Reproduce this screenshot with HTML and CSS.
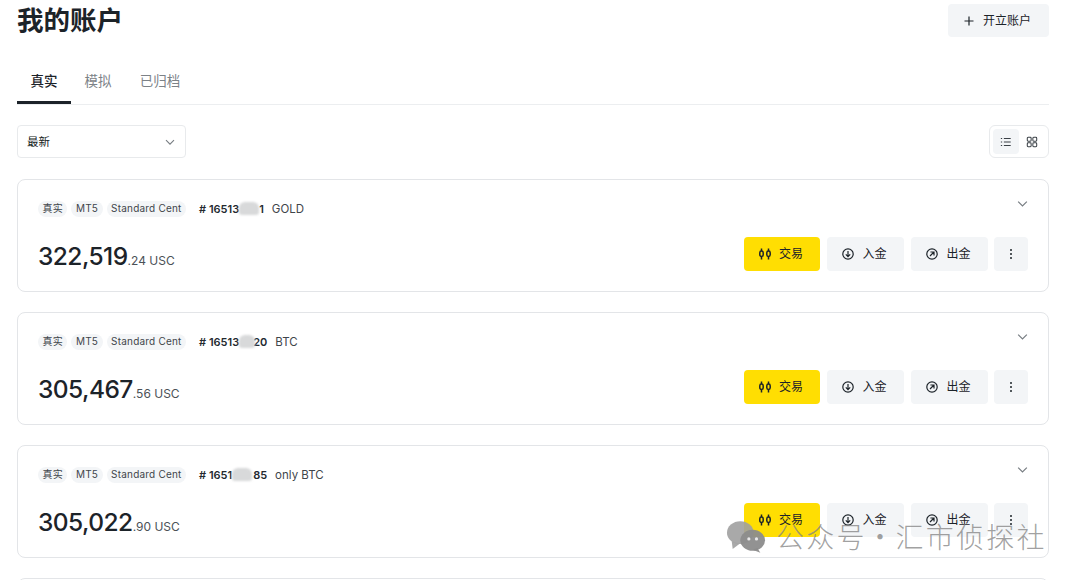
FILE: index.html
```html
<!DOCTYPE html>
<html lang="zh-CN">
<head>
<meta charset="utf-8">
<title>我的账户</title>
<link rel="stylesheet" href="styles.css">
</head>
<body>
<main class="page">
  <header class="head">
    <h1 class="title">我的账户</h1>
    <button class="btn open"><svg class="ic" viewBox="0 0 14 14"><path d="M7 2.500v9M2.500 7h9"/></svg>开立账户</button>
  </header>
  <nav class="tabs">
    <a class="tab active">真实</a>
    <a class="tab">模拟</a>
    <a class="tab">已归档</a>
  </nav>
  <div class="tools">
    <div class="select">最新<svg class="chev" viewBox="0 0 12 12"><path d="M2 4.200l4 4 4-4"/></svg></div>
    <div class="toggle">
      <span class="tg on"><svg class="ic small" viewBox="0 0 14 14"><path d="M4.500 3h8M4.500 7h8M4.500 11h8M1 3h1.500M1 7h1.500M1 11h1.500"/></svg></span>
      <span class="tg"><svg class="ic small" viewBox="0 0 14 14"><rect x="1.500" y="1.500" width="4.500" height="4.500" rx="1"/><rect x="8" y="1.500" width="4.500" height="4.500" rx="1"/><rect x="1.500" y="8" width="4.500" height="4.500" rx="1"/><rect x="8" y="8" width="4.500" height="4.500" rx="1"/></svg></span>
    </div>
  </div>

  <section class="card">
    <div class="row top">
      <div class="meta">
        <span class="chip">真实</span><span class="chip">MT5</span><span class="chip">Standard Cent</span>
        <span class="id"># 16513<i class="blur b1"></i>1</span><span class="name">GOLD</span>
      </div>
      <svg class="chev big" viewBox="0 0 12 12"><path d="M2 4.200l4 4 4-4"/></svg>
    </div>
    <div class="row bottom">
      <div class="bal"><b>322,519</b><span>.24 USC</span></div>
      <div class="acts">
        <button class="btn trade"><svg class="ic candle" viewBox="0 0 14 14"><path d="M3.500 1.500v2.500M3.500 9.500v3M10.500 1.500v2.500M10.500 9.500v3"/><rect x="1.800" y="4" width="3.400" height="5.500" rx="1.700"/><rect x="8.800" y="4" width="3.400" height="5.500" rx="1.700"/></svg>交易</button>
        <button class="btn act"><svg class="ic" viewBox="0 0 14 14"><circle cx="7" cy="7" r="5.200"/><path d="M7 4v5.500M4.800 7.400L7 9.600l2.200-2.200"/></svg>入金</button>
        <button class="btn act"><svg class="ic" viewBox="0 0 14 14"><circle cx="7" cy="7" r="5.200"/><path d="M5 9l4-4M5.400 5H9v3.600"/></svg>出金</button>
        <button class="btn more"><svg class="ic dots" viewBox="0 0 14 14"><circle cx="7" cy="3" r="1"/><circle cx="7" cy="7" r="1"/><circle cx="7" cy="11" r="1"/></svg></button>
      </div>
    </div>
  </section>

  <section class="card">
    <div class="row top">
      <div class="meta">
        <span class="chip">真实</span><span class="chip">MT5</span><span class="chip">Standard Cent</span>
        <span class="id"># 16513<i class="blur b2"></i>20</span><span class="name">BTC</span>
      </div>
      <svg class="chev big" viewBox="0 0 12 12"><path d="M2 4.200l4 4 4-4"/></svg>
    </div>
    <div class="row bottom">
      <div class="bal"><b>305,467</b><span>.56 USC</span></div>
      <div class="acts">
        <button class="btn trade"><svg class="ic candle" viewBox="0 0 14 14"><path d="M3.500 1.500v2.500M3.500 9.500v3M10.500 1.500v2.500M10.500 9.500v3"/><rect x="1.800" y="4" width="3.400" height="5.500" rx="1.700"/><rect x="8.800" y="4" width="3.400" height="5.500" rx="1.700"/></svg>交易</button>
        <button class="btn act"><svg class="ic" viewBox="0 0 14 14"><circle cx="7" cy="7" r="5.200"/><path d="M7 4v5.500M4.800 7.400L7 9.600l2.200-2.200"/></svg>入金</button>
        <button class="btn act"><svg class="ic" viewBox="0 0 14 14"><circle cx="7" cy="7" r="5.200"/><path d="M5 9l4-4M5.400 5H9v3.600"/></svg>出金</button>
        <button class="btn more"><svg class="ic dots" viewBox="0 0 14 14"><circle cx="7" cy="3" r="1"/><circle cx="7" cy="7" r="1"/><circle cx="7" cy="11" r="1"/></svg></button>
      </div>
    </div>
  </section>

  <section class="card">
    <div class="row top">
      <div class="meta">
        <span class="chip">真实</span><span class="chip">MT5</span><span class="chip">Standard Cent</span>
        <span class="id"># 1651<i class="blur b3"></i>85</span><span class="name">only BTC</span>
      </div>
      <svg class="chev big" viewBox="0 0 12 12"><path d="M2 4.200l4 4 4-4"/></svg>
    </div>
    <div class="row bottom">
      <div class="bal"><b>305,022</b><span>.90 USC</span></div>
      <div class="acts">
        <button class="btn trade"><svg class="ic candle" viewBox="0 0 14 14"><path d="M3.500 1.500v2.500M3.500 9.500v3M10.500 1.500v2.500M10.500 9.500v3"/><rect x="1.800" y="4" width="3.400" height="5.500" rx="1.700"/><rect x="8.800" y="4" width="3.400" height="5.500" rx="1.700"/></svg>交易</button>
        <button class="btn act"><svg class="ic" viewBox="0 0 14 14"><circle cx="7" cy="7" r="5.200"/><path d="M7 4v5.500M4.800 7.400L7 9.600l2.200-2.200"/></svg>入金</button>
        <button class="btn act"><svg class="ic" viewBox="0 0 14 14"><circle cx="7" cy="7" r="5.200"/><path d="M5 9l4-4M5.400 5H9v3.600"/></svg>出金</button>
        <button class="btn more"><svg class="ic dots" viewBox="0 0 14 14"><circle cx="7" cy="3" r="1"/><circle cx="7" cy="7" r="1"/><circle cx="7" cy="11" r="1"/></svg></button>
      </div>
    </div>
  </section>

  <section class="card"></section>
</main>

<div class="mark">
  <svg class="wx" viewBox="0 0 42 34">
    <ellipse class="w1" cx="15" cy="13" rx="14" ry="12"/>
    <path class="w1" d="M6 22l1 8 7-5z"/>
    <ellipse class="w2" cx="28" cy="21" rx="13" ry="11"/>
    <path class="w2" d="M33 29l3 5-8-3z"/>
    <circle class="w3" cx="24" cy="19.500" r="1.700"/><circle class="w3" cx="32" cy="19.500" r="1.700"/>
  </svg>
  <span>公众号 · 汇市侦探社</span>
</div>
</body>
</html>
```

FILE: styles.css
```css
* { box-sizing: border-box; }
html, body { margin: 0; height: 580px; overflow: hidden; background: #fff; }
body {
  position: relative;
  font-family: Inter, "Noto Sans CJK SC", sans-serif;
  color: #141a21;
}
.page { width: 1032px; margin-left: 17px; }
.head { display: flex; justify-content: space-between; align-items: flex-start; height: 62px; padding-top: 4px; }
.title { margin: 0; font-size: 26.500px; line-height: 34px; font-weight: 700; margin-top: -2px; font-family: "Noto Sans CJK SC", sans-serif; color: #1c2329; }
.btn { display: inline-flex; align-items: center; justify-content: center; border: 0; border-radius: 4px; font-size: 12px; line-height: 16px; color: #1c2329; font-family: "Noto Sans CJK SC", sans-serif; padding: 0 3px 2px 0; }
.ic { width: 14px; height: 14px; fill: none; stroke: currentColor; stroke-width: 1.200; margin-top: 2px; }
.candle { stroke-width: 1.500; }
.small { width: 12px; height: 12px; margin-top: 0; }
.open { width: 101px; height: 33px; background: #f3f5f7; gap: 7px; padding-right: 4px; }
.tabs { display: flex; height: 43px; border-bottom: 1px solid #eceef0; }
.tab { width: 54px; height: 44px; display: flex; align-items: center; justify-content: center; font-size: 13.500px; color: #7c8287; margin-top: -2px; padding-bottom: 1px; font-family: "Noto Sans CJK SC", sans-serif; border-bottom: 3px solid transparent; }
.tab:nth-child(3) { width: 68px; margin-left: 1px; }
.tab.active { color: #1c2329; border-bottom-color: #1c2329; font-weight: 500; }
.tools { display: flex; justify-content: space-between; margin-top: 20px; height: 33px; }
.select { width: 169px; height: 33px; border: 1px solid #e8eaec; border-radius: 4px; display: flex; align-items: center; justify-content: space-between; padding: 0 9px 2px 9px; font-size: 11.500px; font-family: "Noto Sans CJK SC", sans-serif; }
.chev { width: 12px; height: 12px; fill: none; stroke: #777d82; stroke-width: 1.100; margin-top: 2px; }
.toggle { width: 60px; height: 33px; border: 1px solid #e8eaec; border-radius: 6px; display: flex; padding: 3px; }
.tg { width: 27px; display: flex; align-items: center; justify-content: center; border-radius: 4px; color: #3a4046; }
.tg.on { background: #f3f5f7; }
.card { height: 113px; margin-top: 20px; border: 1px solid #e3e5e8; border-radius: 8px; padding: 0 20px; }
.card:first-of-type { margin-top: 21px; }
.row { display: flex; justify-content: space-between; }
.top { height: 57px; align-items: flex-start; padding-top: 17px; }
.big { width: 13px; height: 13px; margin-top: 0; margin-right: -1px; }
.meta { display: flex; align-items: center; font-size: 10px; height: 24px; }
.chip { height: 16px; line-height: 15px; padding: 0 4.500px; margin-right: 4px; border-radius: 8px; background: #f3f5f7; color: #3f454b; letter-spacing: .2px; white-space: nowrap; }
.chip:nth-child(3) { margin-right: 13px; }
.id { font-size: 11px; font-weight: 600; color: #23292f; white-space: nowrap; display: inline-flex; align-items: center; margin-top: -1px; }
.blur { display: inline-block; background: #d8d9da; filter: blur(1px); height: 13px; border-radius: 6px 6px 3px 3px; }
.b1 { width: 20px; margin: 0; }
.b2 { width: 16px; margin: 0 -2px 0 0; }
.b3 { width: 20px; margin: 0 1px 0 0; }
.name { font-size: 11.500px; margin-left: 8px; margin-top: -1px; color: #3f454b; }
.bottom { align-items: center; height: 34px; }
.bal { display: flex; align-items: baseline; margin-top: 3px; }
.bal b { font-size: 24.500px; font-weight: 500; letter-spacing: -.55px; color: #1c2329; }
.bal span { font-size: 12px; color: #4b5157; }
.acts { display: flex; gap: 7px; }
.acts .btn { height: 34px; width: 76px; gap: 7px; }
.trade { background: #ffde02; }
.acts .act { background: #f3f5f7; width: 77px; }
.acts .more { background: #f3f5f7; width: 34px; margin-left: -1px; padding: 0; }
.acts .more .ic { margin-top: 0; }
.dots { fill: currentColor; stroke: none; }
.mark { position: absolute; left: 726px; top: 518px; display: flex; align-items: center; gap: 10px; color: rgba(130,130,130,.75); font-size: 28px; letter-spacing: 2.200px; word-spacing: -9px; line-height: 36px; font-family: "Noto Sans CJK SC", sans-serif; font-weight: 300; white-space: nowrap; }
.wx { width: 40px; height: 33px; }
.w1 { fill: rgba(160,160,160,.9); }
.w2 { fill: rgba(140,140,140,.95); }
.w3 { fill: #e8e8e8; }
```
